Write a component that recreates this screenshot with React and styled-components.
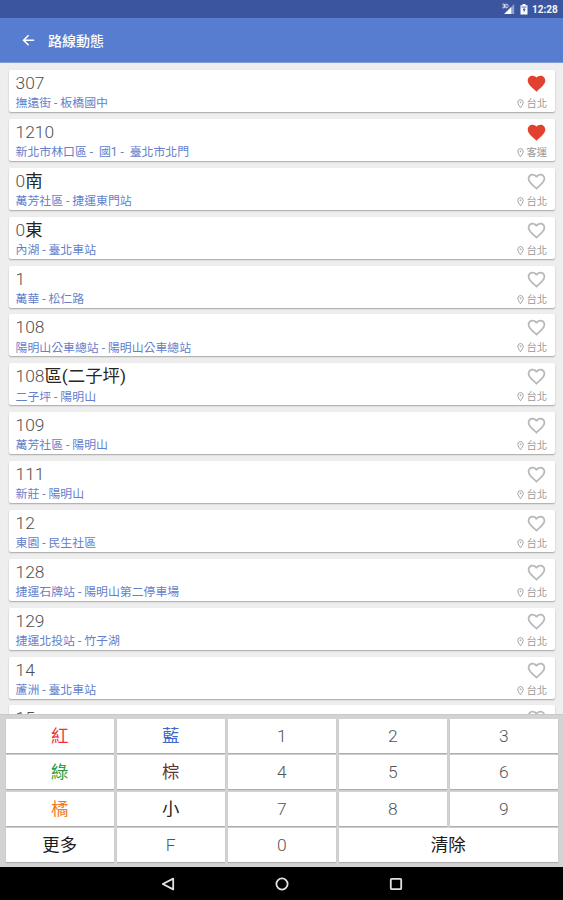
import React from "react";
import styled, { createGlobalStyle } from "styled-components";

const GlobalStyle = createGlobalStyle`
  * {
    box-sizing: border-box;
  }
  body {
    margin: 0;
    font-family: Roboto, "Noto Sans CJK TC", sans-serif;
  }
`;

const Screen = styled.div`
  width: 563px;
  height: 900px;
  display: flex;
  flex-direction: column;
  overflow: hidden;
  background: #eeeeee;
`;

const StatusBar = styled.div`
  flex: none;
  height: 18px;
  padding-right: 5px;
  display: flex;
  align-items: center;
  justify-content: flex-end;
  background: #3b559f;
`;

const Clock = styled.span`
  width: 26px;
  margin-left: 4px;
  padding-top: 1px;
  color: #f2f5fb;
  font-size: 10px;
  font-weight: 700;
  line-height: 17px;
  white-space: nowrap;
`;

const BatteryIcon = styled.svg`
  display: block;
  margin-left: 5px;
`;

const AppBar = styled.header`
  flex: none;
  height: 45px;
  padding-left: 22px;
  display: flex;
  align-items: center;
  gap: 13px;
  background: #567dcf;
  border-bottom: 1px solid #7f9bd4;
`;

const Title = styled.h1`
  margin: 0;
  padding-top: 1px;
  color: #ffffff;
  font-size: 14px;
  font-weight: 500;
  line-height: 20px;
`;

const List = styled.main`
  flex: none;
  height: 651px;
  padding: 7px 8.5px 0 9px;
  overflow: hidden;
`;

const Card = styled.div`
  height: 42px;
  margin-bottom: 6.88px;
  padding: 0 7.3px 0 6.5px;
  display: flex;
  justify-content: space-between;
  background: #ffffff;
  border-radius: 2px;
  box-shadow: 0 1px 1.5px rgba(0, 0, 0, 0.3);
`;

const RouteInfo = styled.div`
  white-space: pre;
`;

const RouteName = styled.div`
  height: 26.3px;
  color: #505050;
  font-size: 17.4px;
  font-weight: 300;
  line-height: 27px;
`;

const Han = styled.span`
  color: #262626;
  font-weight: 400;
`;

const RoutePath = styled.div`
  color: #6380cc;
  font-size: 11.9px;
  line-height: 15px;
`;

const RouteSide = styled.div`
  display: flex;
  flex-direction: column;
  align-items: flex-end;
`;

const HeartIcon = styled.svg`
  display: block;
  margin-top: 3px;
`;

const Area = styled.div`
  margin-top: 3px;
  display: flex;
  align-items: center;
  gap: 2px;
  color: #999999;
  font-size: 10.4px;
  line-height: 14px;
`;

const Keypad = styled.div`
  flex: none;
  height: 153px;
  padding: 3.5px 5px 5px 5.5px;
  display: grid;
  grid-template-columns: repeat(5, 1fr);
  grid-template-rows: repeat(4, 1fr);
  gap: 2.5px;
  background: #d3d3d3;
  border-top: 1px solid #c9c9c9;
`;

const Key = styled.div`
  grid-column: span ${(props) => props.$span || 1};
  display: flex;
  align-items: center;
  justify-content: center;
  background: #ffffff;
  box-shadow: 0 1px 1px rgba(0, 0, 0, 0.18);
  color: ${(props) => props.$color || "#555555"};
  font-size: 17.4px;
  font-weight: ${(props) => (props.$color ? 400 : 300)};
  line-height: 24px;
`;

const NavBar = styled.nav`
  flex: none;
  height: 33px;
  display: flex;
  align-items: center;
  justify-content: center;
  gap: 98px;
  background: #000000;
`;

const routes = [
  { name: "307", path: "撫遠街 - 板橋國中", area: "台北", liked: true },
  { name: "1210", path: "新北市林口區 -  國1 -  臺北市北門", area: "客運", liked: true },
  { name: "0南", path: "萬芳社區 - 捷運東門站", area: "台北" },
  { name: "0東", path: "內湖 - 臺北車站", area: "台北" },
  { name: "1", path: "萬華 - 松仁路", area: "台北" },
  { name: "108", path: "陽明山公車總站 - 陽明山公車總站", area: "台北" },
  { name: "108區(二子坪)", path: "二子坪 - 陽明山", area: "台北" },
  { name: "109", path: "萬芳社區 - 陽明山", area: "台北" },
  { name: "111", path: "新莊 - 陽明山", area: "台北" },
  { name: "12", path: "東園 - 民生社區", area: "台北" },
  { name: "128", path: "捷運石牌站 - 陽明山第二停車場", area: "台北" },
  { name: "129", path: "捷運北投站 - 竹子湖", area: "台北" },
  { name: "14", path: "蘆洲 - 臺北車站", area: "台北" },
  { name: "15", path: "", area: "" },
];

const keys = [
  { label: "紅", color: "#f0303a" },
  { label: "藍", color: "#3f68cf" },
  { label: "1" },
  { label: "2" },
  { label: "3" },
  { label: "綠", color: "#2b9e38" },
  { label: "棕", color: "#5f3535" },
  { label: "4" },
  { label: "5" },
  { label: "6" },
  { label: "橘", color: "#ec7a26" },
  { label: "小", color: "#262626" },
  { label: "7" },
  { label: "8" },
  { label: "9" },
  { label: "更多", color: "#1c1c1c" },
  { label: "F" },
  { label: "0" },
  { label: "清除", color: "#1c1c1c", span: 2 },
];

const Heart = ({ liked }) => (
  <HeartIcon width="21" height="21" viewBox="0 0 24 24">
    {liked ? (
      <path
        fill="#e2412f"
        d="M12 21.35l-1.45-1.32C5.4 15.36 2 12.28 2 8.5 2 5.42 4.42 3 7.5 3c1.74 0 3.41.81 4.5 2.09C13.09 3.81 14.76 3 16.5 3 19.58 3 22 5.42 22 8.5c0 3.78-3.4 6.86-8.55 11.54L12 21.35z"
      />
    ) : (
      <path
        fill="#b8b8b8"
        d="M16.5 3c-1.74 0-3.41.81-4.5 2.09C10.91 3.81 9.24 3 7.5 3 4.42 3 2 5.42 2 8.5c0 3.78 3.4 6.86 8.55 11.54L12 21.35l1.45-1.32C18.6 15.36 22 12.28 22 8.5 22 5.42 19.58 3 16.5 3zm-4.4 15.55l-.1.1-.1-.1C7.14 14.24 4 11.39 4 8.5 4 6.5 5.5 5 7.5 5c1.54 0 3.04.99 3.57 2.36h1.87C13.46 5.99 14.96 5 16.5 5c2 0 3.5 1.5 3.5 3.5 0 2.89-3.14 5.74-7.9 10.05z"
      />
    )}
  </HeartIcon>
);

const Route = ({ route }) => {
  // 中文字比數字粗一點
  const [, number, han] = route.name.match(/^(\d+)(.*)$/);

  return (
    <Card>
      <RouteInfo>
        <RouteName>
          {number}
          {han && <Han>{han}</Han>}
        </RouteName>
        <RoutePath>{route.path}</RoutePath>
      </RouteInfo>
      <RouteSide>
        <Heart liked={route.liked} />
        {route.area && (
          <Area>
            <svg width="7" height="10" viewBox="0 0 7 10" fill="none" stroke="#a3a3a3">
              <path d="M3.5 8.8C2.4 6.9.8 5.2.8 3.3a2.7 2.7 0 0 1 5.4 0C6.2 5.2 4.6 6.9 3.5 8.8z" />
              <circle cx="3.5" cy="3.3" r=".5" />
            </svg>
            {route.area}
          </Area>
        )}
      </RouteSide>
    </Card>
  );
};

const App = () => {
  return (
    <>
      <GlobalStyle />
      <Screen>
        <StatusBar>
          <svg width="13" height="12" viewBox="0 0 13 12">
            <path d="M12.2 1v10H2.2z" fill="#8ea0cf" />
            <path d="M9.2 4v7H2.2z" fill="#ffffff" />
            <path d="M.3 1.2h2.2v3.6H.3M.8 3h1.7M3.8 1.2v3.6h1.3l1-1V2.2l-1-1z" fill="none" stroke="#e3e8f5" strokeWidth=".9" />
          </svg>
          <BatteryIcon width="8" height="11" viewBox="0 0 8 11">
            <path d="M2.5 0h3v1.2h2v9.3h-7V1.2h2z" fill="#ffffff" />
            <path d="M1.4 2.1h5.2v2H1.4z" fill="#a9b7dc" />
            <path d="M4.5 3L2.6 6.2h1.2v2.4l1.9-3.3H4.5z" fill="#3b559f" />
          </BatteryIcon>
          <Clock>12:28</Clock>
        </StatusBar>
        <AppBar>
          <svg width="13" height="12" viewBox="0 0 13 12" fill="none" stroke="#ffffff" strokeWidth="1.6">
            <path d="M12.2 6.3H1.8M6.6 1.3l-5 5 5 5" />
          </svg>
          <Title>路線動態</Title>
        </AppBar>
        <List>
          {routes.map((route) => (
            <Route key={route.name} route={route} />
          ))}
        </List>
        <Keypad>
          {keys.map((key) => (
            <Key key={key.label} $color={key.color} $span={key.span}>
              {key.label}
            </Key>
          ))}
        </Keypad>
        <NavBar>
          <svg width="16" height="16" viewBox="0 0 16 16" fill="none" stroke="#e2e2e2" strokeWidth="1.8" strokeLinejoin="round">
            <path d="M13.2 2.6v10.8L2.8 8z" />
          </svg>
          <svg width="16" height="16" viewBox="0 0 16 16" fill="none" stroke="#e2e2e2" strokeWidth="1.8">
            <circle cx="8" cy="8" r="5.6" />
          </svg>
          <svg width="16" height="16" viewBox="0 0 16 16" fill="none" stroke="#e2e2e2" strokeWidth="1.8">
            <rect x="2.8" y="2.8" width="10.4" height="10.4" rx="1" />
          </svg>
        </NavBar>
      </Screen>
    </>
  );
};

export default App;
